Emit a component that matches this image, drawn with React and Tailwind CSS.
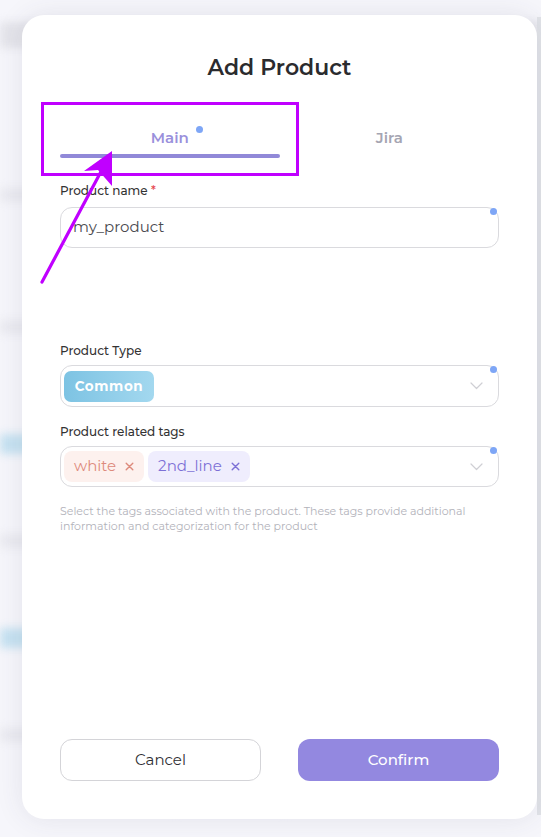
import React from "react";

const font = { fontFamily: '"Montserrat", "Inter", "Noto Sans", sans-serif' };

function Chevron() {
  return (
    <svg width="13" height="8" viewBox="0 0 13 8" fill="none">
      <path d="M1 1l5.5 5.5L12 1" stroke="#cfcfd4" strokeWidth="1.2" strokeLinecap="round" strokeLinejoin="round" />
    </svg>
  );
}

function Cross() {
  return (
    <svg width="9" height="9" viewBox="0 0 9 9" fill="none">
      <path d="M1.2 1.2l6.6 6.6M7.8 1.2L1.2 7.8" stroke="currentColor" strokeWidth="1.4" strokeLinecap="round" />
    </svg>
  );
}

function Dot({ className }) {
  return <span className={"absolute h-[7px] w-[7px] rounded-full bg-[#7ea6f6] " + className} />;
}

function Tag({ label, bg, fg }) {
  return (
    <span className={"flex h-[31px] items-center gap-[9px] rounded-[8px] px-[10px] text-[15px] " + bg + " " + fg}>
      {label}
      <Cross />
    </span>
  );
}

export default function App() {
  return (
    <div className="relative h-[837px] w-[541px] overflow-hidden bg-[#f6f6fb]" style={font}>
      {/* app behind the dialog, softened by the overlay */}
      <div className="absolute inset-0 blur-[4px]">
        <div className="h-[22px]" />
        <div className="h-[26px] bg-[#e4e4ea]" />
        <div className="h-[140px]" />
        <div className="h-[14px] bg-[#eaeaf0]" />
        <div className="h-[118px]" />
        <div className="h-[14px] bg-[#eaeaf0]" />
        <div className="h-[100px]" />
        <div className="h-[20px] bg-[#c6e2f1]" />
        <div className="h-[80px]" />
        <div className="h-[14px] bg-[#eaeaf0]" />
        <div className="h-[80px]" />
        <div className="h-[20px] bg-[#c6e2f1]" />
        <div className="h-[80px]" />
        <div className="h-[14px] bg-[#eaeaf0]" />
        <div className="ml-[160px] mt-[30px] h-[40px] w-[140px] rounded-full bg-[#e8e4fa]" />
      </div>
      <div className="absolute right-0 top-[17px] h-[798px] w-[4px] bg-[#e1e3e8]" />

      {/* dialog */}
      <div className="relative ml-[22px] mt-[15px] flex h-[804px] w-[515px] flex-col rounded-[22px] bg-white px-[38px] shadow-[0_0_28px_rgba(60,60,90,0.10)]">
        <h1 className="mt-[40px] text-center text-[22px] font-semibold leading-[26px] text-[#2b2b2e]">Add Product</h1>

        {/* tabs */}
        <div className="mt-[46px] grid grid-cols-2">
          <div className="flex flex-col items-center">
            <div className="relative flex h-[22px] items-center">
              <span className="text-[15px] font-semibold text-[#9a90dc]">Main</span>
              <Dot className="-right-[14px] top-[-1px] h-[6px] w-[6px]" />
            </div>
            <div className="mt-[5px] h-[4px] w-full rounded-full bg-[#9189d8]" />
          </div>
          <div className="flex flex-col items-center">
            <div className="flex h-[22px] items-center">
              <span className="text-[15px] font-semibold text-[#a5a5b2]">Jira</span>
            </div>
          </div>
        </div>

        {/* product name */}
        <label className="mt-[25px] text-[12px] font-medium leading-[16px] text-[#333]">
          Product name <span className="text-[#e5484d]">*</span>
        </label>
        <div className="relative mt-[8px] flex h-[41px] items-center rounded-[12px] border border-[#dadade] px-[12px]">
          <span className="text-[15px] text-[#4a4a4f]">my_product</span>
          <Dot className="right-[1px] top-0" />
        </div>

        {/* product type */}
        <label className="mt-[95px] text-[12px] font-medium leading-[16px] text-[#333]">Product Type</label>
        <div className="relative mt-[6px] flex h-[42px] items-center justify-between rounded-[12px] border border-[#dadade] pl-[3px] pr-[15px]">
          <span className="flex h-[31px] w-[90px] items-center justify-center rounded-[7px] bg-gradient-to-r from-[#7dc3e3] to-[#a3d8ef] text-[13.5px] font-bold tracking-[0.6px] text-white">
            Common
          </span>
          <Chevron />
          <Dot className="right-[1px] top-0" />
        </div>

        {/* tags */}
        <label className="mt-[17px] text-[12px] font-medium leading-[16px] text-[#333]">Product related tags</label>
        <div className="relative mt-[6px] flex h-[41px] items-center justify-between rounded-[12px] border border-[#dadade] pl-[3px] pr-[15px]">
          <div className="flex gap-[4px]">
            <Tag label="white" bg="bg-[#fdf1ee]" fg="text-[#dd8a7c]" />
            <Tag label="2nd_line" bg="bg-[#efedfd]" fg="text-[#7c70d6]" />
          </div>
          <Chevron />
          <Dot className="right-[1px] top-0" />
        </div>
        <p className="mt-[17px] text-[11px] leading-[15px] text-[#b2b2ba]">
          Select the tags associated with the product. These tags provide additional information and categorization for
          the product
        </p>

        <div className="flex-1" />

        {/* actions */}
        <div className="mb-[38px] flex justify-between">
          <button className="h-[42px] w-[201px] rounded-[12px] border border-[#d4d4d8] text-[15px] text-[#2f2f33]">Cancel</button>
          <button className="h-[42px] w-[201px] rounded-[12px] bg-[#9388e0] text-[15px] font-medium text-white">Confirm</button>
        </div>
      </div>

      {/* annotation: highlight box and arrow */}
      <div className="absolute left-[41px] top-[102px] h-[74px] w-[258px] border-[3px] border-[#c000ff]" />
      <svg className="absolute left-0 top-0" width="541" height="837" viewBox="0 0 541 837">
        <line x1="42" y1="282" x2="104" y2="166" stroke="#c000ff" strokeWidth="3.2" strokeLinecap="round" />
        <polygon points="112,151 84,171 98,170 112,186" fill="#c000ff" />
      </svg>
    </div>
  );
}
